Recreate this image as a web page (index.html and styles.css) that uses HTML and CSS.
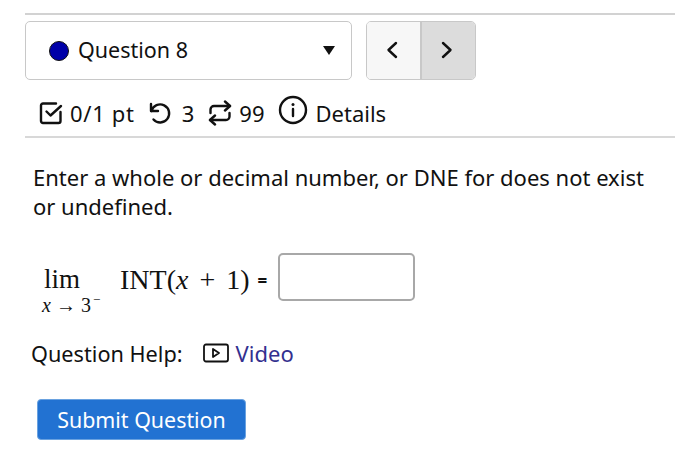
FILE: index.html
```html
<!DOCTYPE html>
<html lang="en">

<head>
    <meta charset="UTF-8">
    <meta name="viewport" content="width=device-width, initial-scale=1.0">
    <title>Question 8</title>

    <link rel="stylesheet" href="styles.css">
</head>

<body>
    <div class="page">
        <div class="head">
            <div class="picker">
                <span class="dot"></span>
                <span class="picker_label">Question 8</span>
                <span class="caret"></span>
            </div>
            <div class="nav">
                <div class="nav_btn">
                    <svg class="nav_ico" width="14" height="18" viewBox="0 0 14 18"><path d="M11 2 L3.500 9 L11 16" class="ico"/></svg>
                </div>
                <div class="nav_btn nav_on">
                    <svg class="nav_ico" width="14" height="18" viewBox="0 0 14 18"><path d="M3 2 L10.500 9 L3 16" class="ico"/></svg>
                </div>
            </div>
        </div>

        <!-- points, tries, attempts -->
        <div class="meta">
            <svg class="m_check" width="24" height="24" viewBox="0 0 24 24">
                <path d="M21.500 11 V20 a2 2 0 0 1 -2 2 H4 a2 2 0 0 1 -2 -2 V4.500 a2 2 0 0 1 2 -2 H17" class="ico"/>
                <path d="M7.500 10.500 L11.500 14.500 L22 5" class="ico"/>
            </svg>
            <span class="m_txt m_pts">0/1 pt</span>
            <svg class="m_undo" width="25" height="24" viewBox="0 0 25 24">
                <path d="M4 3 V10 H11" class="ico"/>
                <path d="M4.500 10 A9 9 0 1 1 6.500 18.500" class="ico"/>
            </svg>
            <span class="m_txt m_tries">3</span>
            <svg class="m_loop" width="24" height="26" viewBox="0 0 24 26">
                <path d="M17 1.500 L22 6 L17 10.500" class="ico"/>
                <path d="M2.500 13 V9.500 a3.500 3.500 0 0 1 3.500 -3.500 H22" class="ico"/>
                <path d="M7 24.500 L2 20 L7 15.500" class="ico"/>
                <path d="M21.500 13 V16.500 a3.500 3.500 0 0 1 -3.500 3.500 H2" class="ico"/>
            </svg>
            <span class="m_txt m_count">99</span>
            <svg class="m_info" width="30" height="30" viewBox="0 0 30 30">
                <circle cx="15" cy="15" r="13" class="ico"/>
                <path d="M15 14 V21" class="ico"/>
                <circle cx="15" cy="9.500" r="1.500" fill="#111"/>
            </svg>
            <span class="m_txt">Details</span>
        </div>

        <p class="prompt">Enter a whole or decimal number, or DNE for does not exist or undefined.</p>

        <div class="math">
            <div class="lim">
                <span class="lim_word">lim</span>
                <span class="lim_sub"><i>x</i> → 3<sup>−</sup></span>
            </div>
            <span class="expr">INT(<i>x</i><span class="plus">+</span>1)</span>
            <span class="eq">=</span>
            <input type="text" class="answer">
        </div>

        <div class="help">
            <span class="help_label">Question Help:</span>
            <svg width="26" height="20" viewBox="0 0 26 20">
                <rect x="1" y="1.500" width="24" height="17" rx="2" class="ico thin"/>
                <path d="M10 6 L16 10 L10 14 Z" class="ico thin"/>
            </svg>
            <a class="video_link">Video</a>
        </div>

        <button class="submit">Submit Question</button>
    </div>
</body>

</html>
```

FILE: styles.css
```css
* {
    box-sizing: border-box;
    font-family: "Noto Sans", "Open Sans", sans-serif;
}

body {
    margin: 0;
    background-color: #fff;
    color: #111;
}

.page {
    width: 650px;
    margin-left: 25px;
    padding-top: 13px;
}

.ico {
    fill: none;
    stroke: #111;
    stroke-width: 2.4;
    stroke-linecap: round;
    stroke-linejoin: round;
}

.thin {
    stroke-width: 1.8;
}

.head {
    display: flex;
    gap: 14px;
    padding-top: 6px;
    border-top: 2px solid #d2d2d2;
}

.picker {
    display: flex;
    align-items: center;
    width: 327px;
    height: 59px;
    padding: 0 16px 0 23px;
    border: 1.500px solid #c8c8c8;
    border-radius: 5px;
}

.dot {
    width: 20px;
    height: 20px;
    margin-right: 9px;
    border-radius: 50%;
    border: 1.500px solid #111;
    background-color: #0000a8;
}

.picker_label {
    flex: 1;
    font-size: 21.500px;
    margin-top: -3px;
}

.caret {
    border-left: 6.500px solid transparent;
    border-right: 6.500px solid transparent;
    border-top: 9px solid #111;
}

.nav {
    display: flex;
    width: 110px;
    height: 59px;
    border: 1.500px solid #c8c8c8;
    border-radius: 5px;
    overflow: hidden;
}

.nav_btn {
    flex: 1;
    display: flex;
    align-items: center;
    justify-content: center;
    background-color: #f7f7f7;
}

.nav_on {
    background-color: #dcdcdc;
    border-left: 2px solid #c8c8c8;
}

.nav_ico {
    margin-right: 3px;
    margin-bottom: 2px;
}

.meta {
    display: flex;
    align-items: center;
    height: 58px;
    padding-top: 9px;
    padding-left: 14px;
    border-bottom: 2px solid #d8d8d8;
}

.m_txt {
    font-size: 22px;
    padding-top: 1px;
}

.m_pts {
    margin-left: 7px;
    letter-spacing: 0.700px;
}

.m_undo {
    margin-left: 12px;
}

.m_tries {
    margin-left: 10px;
}

.m_loop {
    margin-left: 14px;
}

.m_count {
    margin-left: 7px;
}

.m_info {
    margin-left: 13px;
    margin-bottom: 5px;
    margin-right: 8px;
}

.prompt {
    margin: 25px 20px 0 8px;
    font-size: 22px;
    line-height: 29px;
}

.math {
    display: flex;
    align-items: center;
    width: 373px;
    height: 48px;
    margin-top: 32px;
    margin-left: 17px;
}

.lim {
    display: flex;
    flex-direction: column;
    width: 60px;
    height: 48px;
    margin-right: 18px;
}

.lim_word {
    font-family: "Liberation Serif", serif;
    font-size: 27px;
    line-height: 30px;
    margin-top: 11px;
    margin-left: 2px;
}

.lim_sub {
    font-family: "Liberation Serif", serif;
    font-size: 20px;
    line-height: 24px;
    white-space: nowrap;
    margin-top: -1px;
}

.lim_sub i,
.expr i {
    font-family: "Liberation Serif", serif;
}

.lim_sub sup {
    font-family: "Liberation Serif", serif;
    font-size: 13px;
    line-height: 0;
    margin-left: 2px;
}

.expr {
    font-family: "Liberation Serif", serif;
    font-size: 28px;
    padding-top: 5px;
    white-space: nowrap;
}

.plus {
    font-family: "Liberation Serif", serif;
    margin: 0 11px;
}

.eq {
    margin: 0 8px;
    padding-top: 7px;
    font-size: 17px;
    font-weight: 700;
}

.answer {
    width: 137px;
    height: 48px;
    margin-left: auto;
    border: 2px solid #a8a8a8;
    border-radius: 5px;
    outline: none;
}

.help {
    display: flex;
    align-items: center;
    gap: 7px;
    margin-top: 37px;
    margin-left: 6px;
    font-size: 22px;
}

.help_label {
    font-size: 21.700px;
}

.help svg {
    margin-left: 13px;
}

.video_link {
    color: #33308f;
}

.submit {
    display: block;
    width: 209px;
    height: 41px;
    margin-top: 31px;
    margin-left: 12px;
    padding: 0;
    border: 1px solid #6aa2e0;
    border-radius: 4px;
    background-color: #2272d2;
    color: #fff;
    font-size: 21.400px;
}
```
